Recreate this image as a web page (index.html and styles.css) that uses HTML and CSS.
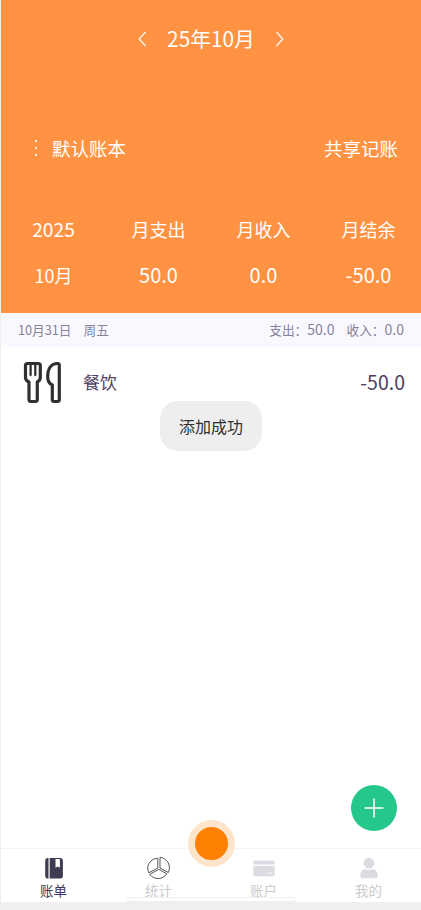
FILE: index.html
```html
<!DOCTYPE html>
<html lang="zh-CN">
<head>
<meta charset="utf-8">
<title>账单</title>
<link rel="stylesheet" href="styles.css">
</head>
<body>
<div class="app">
  <header class="header">
    <div class="month">
      <svg class="chevron" viewBox="0 0 10 18"><path d="M8.5 2 2.2 9l6.3 7"/></svg>
      <span class="month-label">25年10月</span>
      <svg class="chevron" viewBox="0 0 10 18"><path d="m1.5 2 6.3 7-6.3 7"/></svg>
    </div>
    <div class="book">
      <svg class="dots" viewBox="0 0 4 18"><path d="M1 1h2v2H1zM1 8h2v2H1zM1 15h2v2H1z"/></svg>
      <span class="book-name">默认账本</span>
      <span>共享记账</span>
    </div>
    <div class="summary">
      <span class="year">2025</span><span>月支出</span><span>月收入</span><span>月结余</span>
      <span>10月</span><span class="amount">50.0</span><span class="amount">0.0</span><span class="amount">-50.0</span>
    </div>
  </header>
  <main class="list">
    <div class="day">
      <span>10月31日</span><span class="weekday">周五</span>
      <span class="spend">支出：<b>50.0</b></span><span>收入：<b>0.0</b></span>
    </div>
    <div class="entry">
      <svg class="meal" viewBox="0 0 40 44">
        <path d="M4.500 3.500h10.800q2 0 2 2v12q0 3-3 4.500v17.500q0 2-2 2H8q-2 0-2-2V22Q2.500 20.500 2.500 17.500V5.500q0-2 2-2Z"/>
        <path class="tines" d="M7.600 4v11M12.300 4v11"/>
        <path d="M34.500 3.500q1.800 0 1.800 1.800V39.500q0 2-2 2h-3q-2 0-2-2V25q-4.600-2-4.600-8C24.700 9 28 3.500 34.500 3.500Z"/>
      </svg>
      <span class="entry-name">餐饮</span>
      <span class="entry-amount">-50.0</span>
    </div>
    <div class="toast">添加成功</div>
    <div class="add"><svg viewBox="0 0 46 46"><path d="M23 13.500v19M13.500 23h19"/></svg></div>
  </main>
  <nav class="tabs">
    <div class="tab active">
      <svg viewBox="0 0 24 24"><path fill="currentColor" d="M5.500 2H6.500v20.500h-1Q3.200 22.500 3.200 20V4.500q0-2.500 2.300-2.500ZM7.700 2H18.500q2.400 0 2.400 2.500V20q0 2.500-2.400 2.500H7.700ZM13.500 3v8.800l2.200-1.400 2.200 1.400V3Z" fill-rule="evenodd"/></svg>
      <span>账单</span>
    </div>
    <div class="tab">
      <svg class="pie" viewBox="0 0 24 24"><path d="M10.800 2.300A10 10 0 0 0 1.800 16.800l9-4.800ZM13 1.300v10.700l8.300 4.500A10.500 10.500 0 0 0 13 1.300ZM2.700 18.300l9.100-4.900 8 4.300A10.300 10.300 0 0 1 2.700 18.300Z"/></svg>
      <span>统计</span>
    </div>
    <div class="tab">
      <svg viewBox="0 0 24 24"><path fill="currentColor" d="M3 4.500h18q1.700 0 1.700 1.700v2.300H1.300V6.200Q1.300 4.500 3 4.500ZM1.300 10h21.400v8.500q0 1.700-1.700 1.700H3q-1.700 0-1.700-1.700Z"/><path d="M15 17h2.500m.5 0h2.500" stroke="#fff"/></svg>
      <span>账户</span>
    </div>
    <div class="tab">
      <svg viewBox="0 0 24 24"><g fill="currentColor"><circle cx="12" cy="7.200" r="5.400"/><path d="M3.200 20.200c0-4.200 2.500-6.900 5-6.900q3.800 1.400 7.600 0c2.500 0 5 2.700 5 6.900q0 2.100-2 2.100H5.200q-2 0-2-2.100Z"/></g></svg>
      <span>我的</span>
    </div>
    <i class="pointer"></i>
    <i class="handle"></i>
  </nav>
</div>
</body>
</html>
```

FILE: styles.css
```css
* { box-sizing: border-box; }

body {
  margin: 0;
  background: #efefef;
  font-family: "Noto Sans CJK SC", "Noto Sans", sans-serif;
}

.app {
  display: flex;
  flex-direction: column;
  height: 902px;
  margin-left: 1px;
  background: #fff;
}

svg { display: block; flex: none; }

.header {
  height: 313px;
  padding-top: 25px;
  background: #ff9343;
  color: #fff;
  font-size: 18px;
}

.month {
  display: flex;
  align-items: center;
  justify-content: center;
  gap: 20px;
  height: 28px;
  font-size: 20.8px;
}

.month-label { line-height: 28px; padding-bottom: 2px; }

.chevron {
  width: 10px;
  height: 18px;
  fill: none;
  stroke: #fff;
  stroke-width: 1.2;
}

.book {
  display: flex;
  align-items: center;
  height: 30px;
  margin-top: 80px;
  padding: 0 23px 0 33px;
  font-size: 18.5px;
  line-height: 30px;
}

.dots { width: 4px; height: 18px; fill: #fff0e5; }

.book-name { margin: 0 auto 0 14px; }

.summary {
  display: grid;
  grid-template-columns: repeat(4, 1fr);
  grid-auto-rows: 46px;
  margin-top: 43px;
  text-align: center;
  line-height: 46px;
}

.summary .year { font-size: 19.200px; }

.summary .amount { font-size: 20px; }

.list { position: relative; flex: 1; }

.day {
  display: flex;
  align-items: center;
  height: 34px;
  padding: 0 17px;
  background: #faf8ff;
  color: #85829a;
  font-size: 12.700px;
  line-height: 34px;
}

.day b { font-weight: 400; font-size: 14px; line-height: 1; }

.weekday { margin-left: 12px; }

.spend { margin: 0 12px 0 auto; }

.entry {
  display: flex;
  align-items: center;
  height: 70px;
  padding: 0 16px 0 22px;
  color: #503d61;
}

.meal {
  width: 40px;
  height: 44px;
  fill: none;
  stroke: #303030;
  stroke-width: 3.2;
  stroke-linejoin: round;
}

.tines { stroke-width: 2.300; stroke-linecap: round; }

.entry-name { margin-left: 20px; padding-bottom: 2px; font-size: 17px; }

.entry-amount { margin-left: auto; padding-bottom: 2px; font-size: 19.5px; }

.toast {
  position: absolute;
  top: 88px;
  left: 159px;
  width: 102px;
  height: 50px;
  border-radius: 18px;
  background: #eee;
  color: #303030;
  font-size: 16px;
  line-height: 50px;
  text-align: center;
}

.add {
  position: absolute;
  right: 24px;
  bottom: 17px;
  width: 46px;
  height: 46px;
  border-radius: 50%;
  background: #25c88b;
}

.add svg { stroke: #fff; stroke-width: 1.600; }

.tabs {
  position: relative;
  display: grid;
  grid-template-columns: repeat(4, 1fr);
  height: 54px;
  border-top: 1px solid #f3f3f3;
}

.tab {
  display: flex;
  flex-direction: column;
  align-items: center;
  padding-top: 7px;
  color: #dcdbe2;
  font-size: 13.500px;
  line-height: 20px;
}

.tab svg { width: 24px; height: 24px; }

.tab span { color: #cbcbce; }

.tab.active, .tab.active span { color: #403b52; }

.pie { fill: none; stroke: #555; stroke-width: 1; }

.pointer {
  position: absolute;
  top: -29px;
  left: 187px;
  width: 47px;
  height: 47px;
  border: 7.500px solid #ffe4cc;
  border-radius: 50%;
  background: #ff8103;
}

.handle {
  position: absolute;
  bottom: 0;
  left: 126px;
  width: 169px;
  height: 5px;
  border: 1px solid #efefef;
  border-radius: 3px;
  background: #fff;
}
```
